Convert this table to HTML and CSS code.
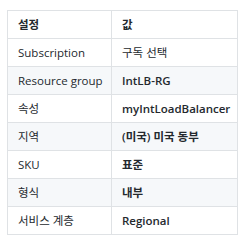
FILE: index.html
```html
<!DOCTYPE html>
<html lang="ko">
<head>
<meta charset="utf-8">
<link rel="stylesheet" href="styles.css">
</head>
<body>
<table class="settings">
  <colgroup><col class="c1"><col class="c2"></colgroup>
  <thead>
    <tr><th>설정</th><th>값</th></tr>
  </thead>
  <tbody>
    <tr><td>Subscription</td><td>구독 선택</td></tr>
    <tr><td>Resource group</td><td class="b">IntLB-RG</td></tr>
    <tr><td>속성</td><td class="b">myIntLoadBalancer</td></tr>
    <tr><td>지역</td><td class="b">(미국) 미국 동부</td></tr>
    <tr><td>SKU</td><td class="b">표준</td></tr>
    <tr><td>형식</td><td class="b">내부</td></tr>
    <tr><td>서비스 계층</td><td class="b">Regional</td></tr>
  </tbody>
</table>
</body>
</html>
```
FILE: styles.css
```css
html, body { margin: 0; background: #fff; }
body {
  padding: 10px 0 0 7px;
  font-family: "Open Sans", "Noto Sans CJK KR", sans-serif;
  font-size: 11.5px;
  color: #24292e;
}
.settings {
  border-collapse: collapse;
  width: 231px;
  table-layout: fixed;
}
.c1 { width: 104px; }
.settings th, .settings td {
  border: 1px solid #dfe2e5;
  padding: 5px 10px;
  line-height: 17px;
  text-align: left;
  white-space: nowrap;
}
.settings th { font-weight: 600; }
.settings td.b { font-weight: 600; }
.settings tbody tr:nth-child(even) { background: #f6f8fa; }
```
